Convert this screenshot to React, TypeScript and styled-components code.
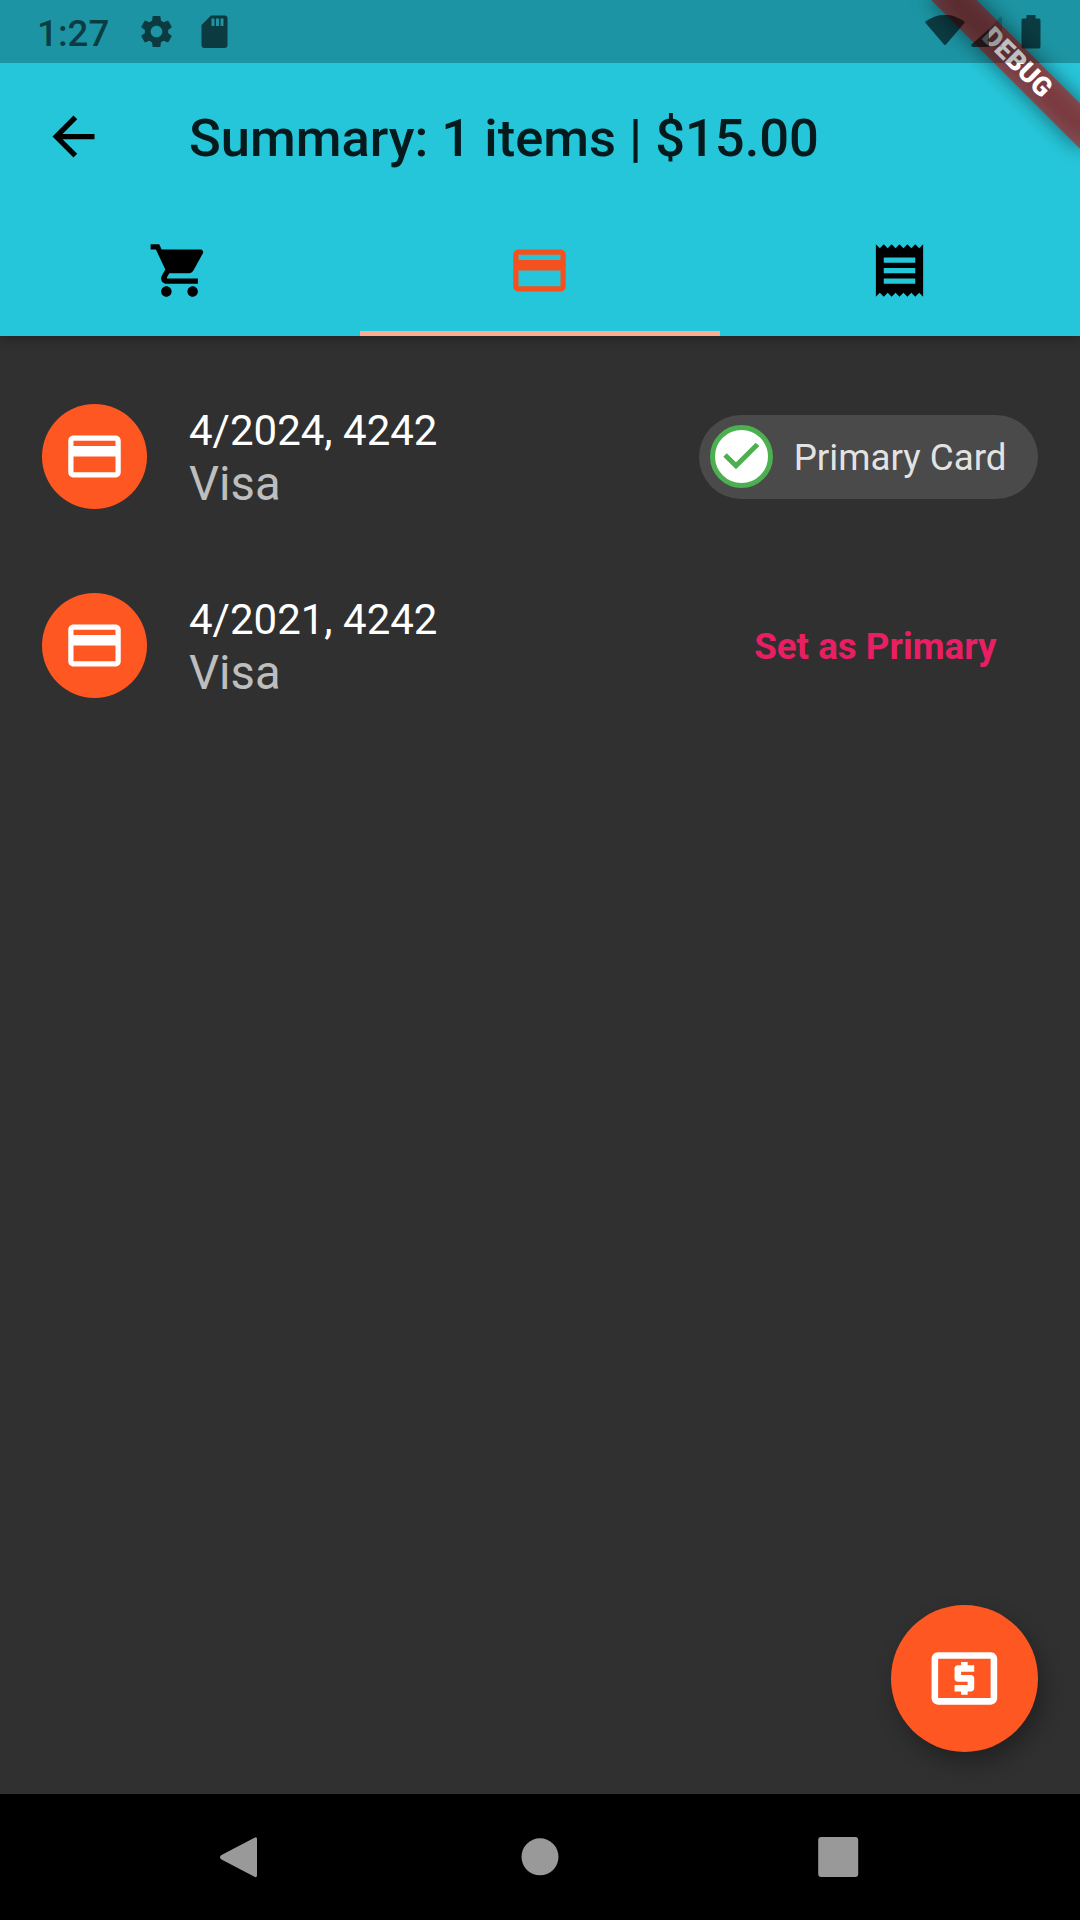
import React from 'react';
import styled, { createGlobalStyle } from 'styled-components';
import {
  MdArrowBack,
  MdLocalAtm,
  MdPayment,
  MdReceipt,
  MdSettings,
  MdShoppingCart,
} from 'react-icons/md';

const GlobalStyle = createGlobalStyle`
  * { box-sizing: border-box; }
  body { margin: 0; background: #303030; }
  button { border: 0; background: none; padding: 0; font: inherit; color: inherit; }
`;

const Screen = styled.div`
  position: relative;
  display: flex;
  flex-direction: column;
  width: 1080px;
  height: 1920px;
  overflow: hidden;
  background: #303030;
  color: #fff;
  font-family: Roboto, 'Noto Sans', sans-serif;
`;

const Header = styled.header`
  flex: none;
  background: #26c6da;
  padding-top: 63px;
  box-shadow: 0 3px 12px rgba(0, 0, 0, 0.3);
`;

const Toolbar = styled.div`
  display: flex;
  align-items: center;
  height: 147px;
  padding-left: 42px;
`;

const BackButton = styled.button`
  display: flex;
  width: 147px;
  color: #000;
  font-size: 63px;
`;

const Title = styled.h1`
  margin: 0;
  padding-top: 2px;
  color: rgba(0, 0, 0, 0.87);
  font-size: 52.5px;
  font-weight: 500;
  line-height: 62px;
  white-space: nowrap;
`;

const Tabs = styled.nav`
  display: grid;
  grid-template-columns: repeat(3, 1fr);
  height: 126px;
`;

const Tab = styled.button<{ $active?: boolean }>`
  display: flex;
  align-items: center;
  justify-content: center;
  padding-right: 1px;
  font-size: 63px;
  color: ${(p) => (p.$active ? '#f4511e' : '#000')};
  border-bottom: 5.25px solid ${(p) => (p.$active ? '#ffab91' : 'transparent')};
`;

const CardList = styled.ul`
  flex: 1;
  margin: 0;
  padding: 26px 0 0;
  list-style: none;
`;

const CardRow = styled.li`
  display: flex;
  align-items: center;
  height: 189px;
  padding: 0 42px;
`;

const CardAvatar = styled.span`
  display: flex;
  flex: none;
  align-items: center;
  justify-content: center;
  width: 105px;
  height: 105px;
  margin-right: 42px;
  border-radius: 50%;
  background: #ff5722;
  font-size: 63px;
`;

const CardText = styled.div`
  flex: 1;
  padding-top: 4px;
`;

const CardNumber = styled.div`
  font-size: 42px;
  line-height: 49px;
`;

const CardBrand = styled.div`
  padding-top: 1px;
  color: rgba(255, 255, 255, 0.7);
  font-size: 47.25px;
  line-height: 56px;
`;

const Chip = styled.span`
  display: flex;
  align-items: center;
  height: 84px;
  padding: 0 31.5px 0 10.5px;
  border-radius: 42px;
  background: #4a4a4a;
  color: rgba(255, 255, 255, 0.87);
  font-size: 36.75px;
  white-space: nowrap;
`;

const ChipLabel = styled.span`
  padding-top: 2px;
`;

const ChipCheck = styled.span`
  display: flex;
  align-items: center;
  justify-content: center;
  width: 63px;
  height: 63px;
  margin-right: 21px;
  border: 5.25px solid #4caf50;
  border-radius: 50%;
  background: #fff;
`;

const CheckMark = styled.svg`
  width: 53px;
  height: 53px;
  fill: #4caf50;
`;

const SetPrimary = styled.button`
  height: 94px;
  padding: 2px 41.5px 0 42px;
  color: #e91e63;
  font-size: 36.75px;
  font-weight: 700;
  white-space: nowrap;
`;

const Fab = styled.button`
  display: flex;
  flex: none;
  align-self: flex-end;
  align-items: center;
  justify-content: center;
  width: 147px;
  height: 147px;
  margin: 0 42px 42px 0;
  border-radius: 50%;
  background: #ff5722;
  color: #fff;
  font-size: 78.75px;
  box-shadow: 5px 11px 22px rgba(0, 0, 0, 0.3);
`;

const SystemNav = styled.footer`
  display: flex;
  flex: none;
  align-items: center;
  justify-content: center;
  gap: 235px;
  height: 126px;
  background: #000;
`;

const NavGlyph = styled.svg`
  width: 63px;
  height: 63px;
  fill: #999;
`;

const StatusBar = styled.div`
  position: absolute;
  inset: 0 0 auto 0;
  display: flex;
  align-items: center;
  justify-content: space-between;
  height: 63px;
  padding: 0 38px 0 37px;
  background: rgba(0, 0, 0, 0.25);
  color: rgba(0, 0, 0, 0.6);
`;

const StatusGroup = styled.div`
  display: flex;
  align-items: center;
`;

const Clock = styled.span`
  width: 100px;
  font-size: 36.75px;
  font-weight: 500;
  line-height: 43px;
  padding-top: 3px;
`;

const GearIcon = styled(MdSettings)`
  width: 39px;
  height: 39px;
`;

const StatusGlyph = styled.svg<{ $w: number; $gap?: number }>`
  width: ${(p) => p.$w}px;
  height: 34px;
  margin-left: ${(p) => p.$gap ?? 0}px;
  fill: currentColor;
`;

const Ribbon = styled.div`
  position: absolute;
  top: 47px;
  left: 912.25px;
  display: flex;
  align-items: center;
  justify-content: center;
  width: 210px;
  height: 31.5px;
  transform: rotate(45deg);
  color: #fff;
  font-size: 26.8px;
  font-weight: 900;
  line-height: 1;

  &::before,
  &::after {
    content: '';
    position: absolute;
    inset: 0;
    z-index: -1;
  }
  &::before {
    background: rgba(0, 0, 0, 0.5);
    filter: blur(10.4px);
  }
  &::after {
    background: rgba(183, 28, 28, 0.627);
  }
`;

const cards = [
  { number: '4/2024, 4242', brand: 'Visa', primary: true },
  { number: '4/2021, 4242', brand: 'Visa', primary: false },
];

export default function App() {
  return (
    <Screen>
      <GlobalStyle />
      <Header>
        <Toolbar>
          <BackButton aria-label="Back">
            <MdArrowBack />
          </BackButton>
          <Title>Summary: 1 items | $15.00</Title>
        </Toolbar>
        <Tabs>
          <Tab aria-label="Cart">
            <MdShoppingCart />
          </Tab>
          <Tab aria-label="Payment" $active>
            <MdPayment />
          </Tab>
          <Tab aria-label="Receipt">
            <MdReceipt />
          </Tab>
        </Tabs>
      </Header>

      <CardList>
        {cards.map((card) => (
          <CardRow key={card.number}>
            <CardAvatar>
              <MdPayment />
            </CardAvatar>
            <CardText>
              <CardNumber>{card.number}</CardNumber>
              <CardBrand>{card.brand}</CardBrand>
            </CardText>
            {card.primary ? (
              <Chip>
                <ChipCheck>
                  <CheckMark viewBox="15 15 159 159">
                    <path d="M40 95L50 85L78 112L137 53L148 63L78 133Z" />
                  </CheckMark>
                </ChipCheck>
                <ChipLabel>Primary Card</ChipLabel>
              </Chip>
            ) : (
              <SetPrimary>Set as Primary</SetPrimary>
            )}
          </CardRow>
        ))}
      </CardList>

      <Fab aria-label="Pay">
        <MdLocalAtm />
      </Fab>

      <SystemNav>
        <NavGlyph viewBox="0 0 63 63">
          <path d="M46 13Q46 10 43 12L10.500 29Q7.500 31.200 10.500 33.500L43 50.500Q46 52.500 46 49Z" />
        </NavGlyph>
        <NavGlyph viewBox="0 0 63 63">
          <circle cx="31" cy="30.8" r="18.5" />
        </NavGlyph>
        <NavGlyph viewBox="0 0 63 63">
          <rect x="11.2" y="11" width="40" height="40" rx="3" />
        </NavGlyph>
      </SystemNav>

      <Ribbon>DEBUG</Ribbon>

      <StatusBar>
        <StatusGroup>
          <Clock>1:27</Clock>
          <GearIcon />
          <StatusGlyph $w={27} $gap={25} viewBox="0 0 27 34">
            <path
              fillRule="evenodd"
              d="M10 0.500H23.500Q26.500 0.500 26.500 3.500V30Q26.500 33 23.500 33H3.500Q0.500 33 0.500 30V10ZM10.500 3.500V11H13.500V3.500ZM15 3.500V11H18V3.500ZM19.500 3.500V11H22.500V3.500Z"
            />
          </StatusGlyph>
        </StatusGroup>
        <StatusGroup>
          <StatusGlyph $w={40} viewBox="0 0 40 34">
            <path d="M0.500 6.500Q20-7 39.500 6.500Q40 7.500 39 8.500L21 29.500Q20 30.500 19 29.500L1 8.500Q0 7.500 0.500 6.500Z" />
          </StatusGlyph>
          <StatusGlyph $w={31} $gap={6} viewBox="0 0 31 34">
            <path d="M18 14V32H2Q-1 31 1 29Z" />
            <path opacity="0.3" d="M18 14L29 2Q31 0.500 31 3V32H18Z" />
          </StatusGlyph>
          <StatusGlyph $w={22} $gap={18.5} viewBox="0 0 22 34">
            <path d="M6.500 0H15.500V3.500H19Q20.500 3.500 20.500 5.500V31.500Q20.500 33.500 19 33.500H3Q1.500 33.500 1.500 31.500V5.500Q1.500 3.500 3 3.500H6.500Z" />
          </StatusGlyph>
        </StatusGroup>
      </StatusBar>
    </Screen>
  );
}
